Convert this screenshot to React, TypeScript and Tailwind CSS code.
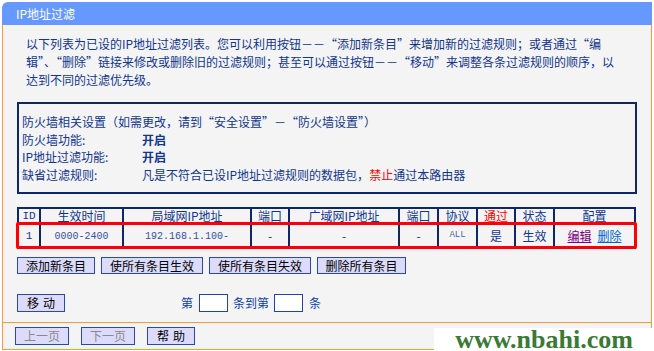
import React from "react";

const F = { fontFamily: "'Noto Sans CJK SC', 'Liberation Sans', sans-serif" };
const M = { fontFamily: "'Liberation Mono', 'Noto Sans CJK SC', monospace" };

const cols = "grid-cols-[20px_81px_126px_36px_108px_37px_37px_36px_37px_79px]";

function Btn({ children, w, disabled }: { children: React.ReactNode; w: string; disabled?: boolean }) {
  return (
    <div
      className={`${w} h-full flex items-center justify-center border border-[#2a48b0] bg-[#dcdcfa] text-[12px] leading-none whitespace-nowrap ${disabled ? "text-[#8a8a8a]" : "text-black"}`}
    >
      {children}
    </div>
  );
}

export default function App() {
  return (
    <div className="w-[654px] h-[351px] bg-white relative overflow-hidden pt-[2px] pl-[2px]" style={F}>
      <div className="w-[650px]">
        <div className="h-[23px] bg-[#6699ff] rounded-tl-[6px] flex items-center pl-[14px] text-white text-[12px] leading-none">
          IP地址过滤
        </div>
        <div className="h-[298px] bg-[#f4f4f4] border-l border-r border-b border-[#ff9933] text-[#12358f] text-[12px]">
          <div className="pt-[10px] pl-[23px] leading-[18px] whitespace-nowrap">
            <div>以下列表为已设的IP地址过滤列表。您可以利用按钮－－“添加新条目”来增加新的过滤规则；或者通过“编</div>
            <div>辑”、“删除”链接来修改或删除旧的过滤规则；甚至可以通过按钮－－“移动”来调整各条过滤规则的顺序，以</div>
            <div>达到不同的过滤优先级。</div>
          </div>
          <div className="mt-[13px] ml-[14px] w-[620px] border-2 border-[#0e2766] pt-[9px] pb-[9px] pl-[3px] leading-[17.5px] whitespace-nowrap">
            <div>防火墙相关设置（如需更改，请到“安全设置”－“防火墙设置”）</div>
            <div className="flex">
              <span className="w-[120px]">防火墙功能:</span>
              <span className="font-bold">开启</span>
            </div>
            <div className="flex">
              <span className="w-[120px]">IP地址过滤功能:</span>
              <span className="font-bold">开启</span>
            </div>
            <div className="flex">
              <span className="w-[120px]">缺省过滤规则:</span>
              <span>
                凡是不符合已设IP地址过滤规则的数据包，<span className="text-[#ff0000]">禁止</span>通过本路由器
              </span>
            </div>
          </div>
          <div className="relative mt-[13px] ml-[14px] w-[619px]">
            <div className={`grid ${cols} gap-[2px] p-[2px] bg-[#0e2766]`}>
              <div className="h-[14px] bg-[#f4f4f4] flex items-center justify-center text-[11px]" style={M}>ID</div>
              <div className="h-[14px] bg-[#f4f4f4] flex items-center justify-center">生效时间</div>
              <div className="h-[14px] bg-[#f4f4f4] flex items-center justify-center">局域网IP地址</div>
              <div className="h-[14px] bg-[#f4f4f4] flex items-center justify-center">端口</div>
              <div className="h-[14px] bg-[#f4f4f4] flex items-center justify-center">广域网IP地址</div>
              <div className="h-[14px] bg-[#f4f4f4] flex items-center justify-center">端口</div>
              <div className="h-[14px] bg-[#f4f4f4] flex items-center justify-center">协议</div>
              <div className="h-[14px] bg-[#f4f4f4] flex items-center justify-center text-[#ff0000]">通过</div>
              <div className="h-[14px] bg-[#f4f4f4] flex items-center justify-center">状态</div>
              <div className="h-[14px] bg-[#f4f4f4] flex items-center justify-center">配置</div>

              <div className="h-[22px] bg-[#f4f4f4] flex items-center justify-center text-[11px]" style={M}>1</div>
              <div className="h-[22px] bg-[#f4f4f4] flex items-center justify-center text-[10px] text-[#3550a5]" style={M}>0000-2400</div>
              <div className="h-[22px] bg-[#f4f4f4] flex items-center justify-center text-[10px] text-[#3550a5]" style={M}>192.168.1.100-</div>
              <div className="h-[22px] bg-[#f4f4f4] flex items-center justify-center">-</div>
              <div className="h-[22px] bg-[#f4f4f4] flex items-center justify-center">-</div>
              <div className="h-[22px] bg-[#f4f4f4] flex items-center justify-center">-</div>
              <div className="h-[22px] bg-[#f4f4f4] flex items-center justify-center text-[9px] text-[#4a5fb0]" style={M}>ALL</div>
              <div className="h-[22px] bg-[#f4f4f4] flex items-center justify-center">是</div>
              <div className="h-[22px] bg-[#f4f4f4] flex items-center justify-center">生效</div>
              <div className="h-[22px] bg-[#f4f4f4] flex items-center justify-center gap-[6px]">
                <span className="text-[#800080] underline">编辑</span>
                <span className="text-[#0066cc] underline">删除</span>
              </div>
            </div>
            <div className="absolute left-[-1px] top-[15px] w-[621px] h-[27px] border-[3px] border-[#ff0000] rounded-[2px] pointer-events-none" />
          </div>
          <div className="mt-[8px] ml-[14px] h-[17px] flex gap-[6px]">
            <Btn w="w-[78px]">添加新条目</Btn>
            <Btn w="w-[102px]">使所有条目生效</Btn>
            <Btn w="w-[102px]">使所有条目失效</Btn>
            <Btn w="w-[89px]">删除所有条目</Btn>
          </div>
          <div className="mt-[20px] ml-[14px] h-[18px] flex items-center text-[#0c3fa8]">
            <Btn w="w-[48px]">
              <span className="tracking-[4px] pl-[4px]">移动</span>
            </Btn>
            <span className="ml-[116px]">第</span>
            <div className="ml-[6px] w-[29px] h-[18px] bg-white border border-[#1d45b0]" />
            <span className="ml-[5px]">条到第</span>
            <div className="ml-[5px] w-[29px] h-[18px] bg-white border border-[#1d45b0]" />
            <span className="ml-[6px]">条</span>
          </div>
        </div>
        <div className="h-[27px] bg-[#f4f4f4] border-l border-r border-b border-[#ff9933] pl-[12px] pt-[4px]">
          <div className="h-[18px] flex gap-[12px]">
            <Btn w="w-[54px]" disabled>上一页</Btn>
            <Btn w="w-[54px]" disabled>下一页</Btn>
            <Btn w="w-[48px]">
              <span className="tracking-[4px] pl-[4px]">帮助</span>
            </Btn>
          </div>
        </div>
      </div>
      <div className="absolute left-[434px] top-[328px] w-[220px] h-[23px] bg-white flex items-center justify-center">
        <span
          className="text-[26px] font-bold text-[#3b7a35] leading-[23px] whitespace-nowrap"
          style={{ fontFamily: "'Liberation Serif', serif" }}
        >
          www.nbahi.com
        </span>
      </div>
    </div>
  );
}
